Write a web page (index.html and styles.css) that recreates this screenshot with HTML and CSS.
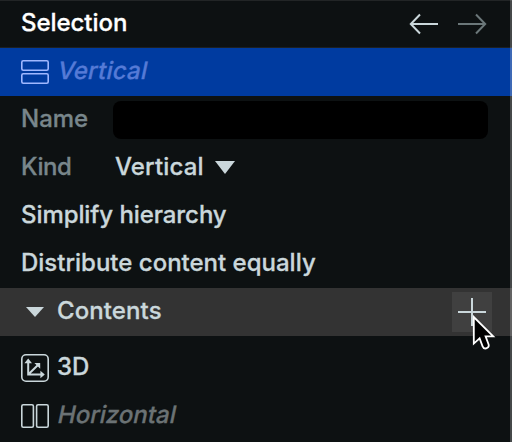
FILE: index.html
```html
<!DOCTYPE html>
<html lang="en">
<head>
<meta charset="utf-8">
<title>Selection</title>
<link rel="stylesheet" href="styles.css">
</head>
<body>
<div class="panel">
  <div class="row header">
    <span class="title">Selection</span>
    <svg class="arrow" width="30" height="22" viewBox="0 0 30 22"><path d="M29 11H2M11 1.5L1.8 11L11 20.5"/></svg>
    <svg class="arrow forward" width="30" height="22" viewBox="0 0 30 22"><path d="M1 11H28M19 1.5L28.2 11L19 20.5"/></svg>
  </div>
  <div class="row selected">
    <svg class="icon" width="28" height="28" viewBox="0 0 28 28"><rect x=".8" y="2.8" width="26.4" height="9.4" rx="1.5"/><rect x=".8" y="15.8" width="26.4" height="9.4" rx="1.5"/></svg>
    <span class="unnamed">Vertical</span>
  </div>
  <div class="row">
    <label class="label" for="name">Name</label>
    <input type="text" id="name" class="name">
  </div>
  <div class="row">
    <span class="label narrow">Kind</span>
    <span class="kind">Vertical</span>
    <svg class="triangle" width="20" height="13" viewBox="0 0 20 13"><path d="M0 0H20L10 13Z"/></svg>
  </div>
  <div class="row"><span class="simplify">Simplify hierarchy</span></div>
  <div class="row"><span class="distribute">Distribute content equally</span></div>
  <div class="row contents">
    <svg class="triangle" width="18" height="10" viewBox="0 0 18 10"><path d="M0 0H18L9 10Z"/></svg>
    <span class="heading">Contents</span>
    <button class="add">
      <svg width="28" height="28" viewBox="0 0 28 28"><path d="M0 14H28M14 0V28"/></svg>
      <svg class="cursor" width="24" height="36" viewBox="0 0 24 36"><path d="M1.8 2V28.6L7.6 23.4L10.6 31.4Q11.6 34 14.2 33.4Q17.4 32.4 16.6 29.4L13.6 21.4H21.2Z"/></svg>
    </button>
  </div>
  <div class="items">
    <div class="row">
      <svg class="icon" width="28" height="28" viewBox="0 0 28 28"><rect x=".8" y=".8" width="26.4" height="26.4" rx="4.2"/><path class="axes" d="M7.2 7V20.5H21M7.2 20.5L17 11"/><path class="tip" d="M7.2 4.4L11 9.2H3.4ZM23.8 20.5L19.4 24.3V16.7ZM19.2 9V14.8L13.4 9Z"/></svg>
      <span class="item">3D</span>
    </div>
    <div class="row">
      <svg class="icon" width="28" height="28" viewBox="0 0 28 28"><rect x=".8" y="2.8" width="11.6" height="22.4" rx="1.5"/><rect x="15.6" y="2.8" width="11.6" height="22.4" rx="1.5"/></svg>
      <span class="unnamed">Horizontal</span>
    </div>
  </div>
</div>
</body>
</html>
```

FILE: styles.css
```css
body {
    margin: 0;
    background: #0d1112;
    color: #cad7db;
    font: 500 24px/44px Inter, "Liberation Sans", sans-serif;
    -webkit-text-stroke: 0.3px;
    overflow: hidden;
}
.panel {
    position: relative;
    height: 442px;
    box-sizing: border-box;
}
/* edge of the neighbouring panel */
.panel::after {
    content: "";
    position: absolute;
    top: 0;
    right: 0;
    bottom: 0;
    width: 2px;
    background: rgba(255, 255, 255, 0.24);
}
.row {
    display: flex;
    align-items: center;
    height: 48px;
    padding: 0 24px 0 21px;
    box-sizing: border-box;
    white-space: nowrap;
}
.row span, .row label {
    padding-bottom: 2px;
}
.header {
    border-top: 1px solid #222526;
    border-bottom: 1px solid #1d2021;
}
.title {
    color: #fff;
    flex: 1;
    letter-spacing: -0.05px;
}
.arrow {
    fill: none;
    stroke: #cad7db;
    stroke-width: 2;
}
.forward {
    margin-left: 18px;
    margin-right: 1px;
    stroke: #6b7779;
}
.selected {
    background: #003ba0;
}
.icon {
    flex: none;
    fill: none;
    stroke: #cad7db;
    stroke-width: 1.6;
    margin-right: 8px;
}
.icon .axes {
    stroke-width: 2;
}
.icon .tip {
    fill: #cad7db;
    stroke: none;
}
.selected .icon {
    stroke: #a0b8ff;
}
/* slanted upright letters, not the italic cut */
.unnamed {
    color: #6b7274;
    margin-left: 1px;
    transform: skewX(-12deg);
}
.selected .unnamed {
    color: #557ad6;
    letter-spacing: 0.25px;
}
.label {
    width: 92px;
    flex: none;
    color: #78868b;
}
.narrow {
    letter-spacing: -0.4px;
}
.name {
    flex: 1;
    min-width: 0;
    height: 38px;
    box-sizing: border-box;
    padding: 0 8px;
    border: 0;
    border-radius: 8px;
    background: #000;
    color: inherit;
    font: inherit;
}
.kind {
    margin-left: 2px;
    letter-spacing: 0.15px;
}
.simplify {
    letter-spacing: -0.08px;
}
.triangle {
    fill: #cad7db;
}
.kind + .triangle {
    margin-left: 11px;
    margin-bottom: 1px;
}
.contents {
    background: #333;
    padding-left: 26px;
    padding-right: 20px;
}
.heading {
    flex: 1;
    margin-left: 13px;
    letter-spacing: 0.1px;
}
.add {
    position: relative;
    width: 40px;
    height: 40px;
    padding: 6px;
    border: 0;
    background: #404040;
}
.add svg {
    display: block;
    stroke: #cad7db;
    stroke-width: 2;
}
.add .cursor {
    position: absolute;
    left: 20px;
    top: 23px;
    fill: #000;
    stroke: #fff;
    stroke-width: 1.8;
}
.items {
    padding-top: 8px;
}
```
